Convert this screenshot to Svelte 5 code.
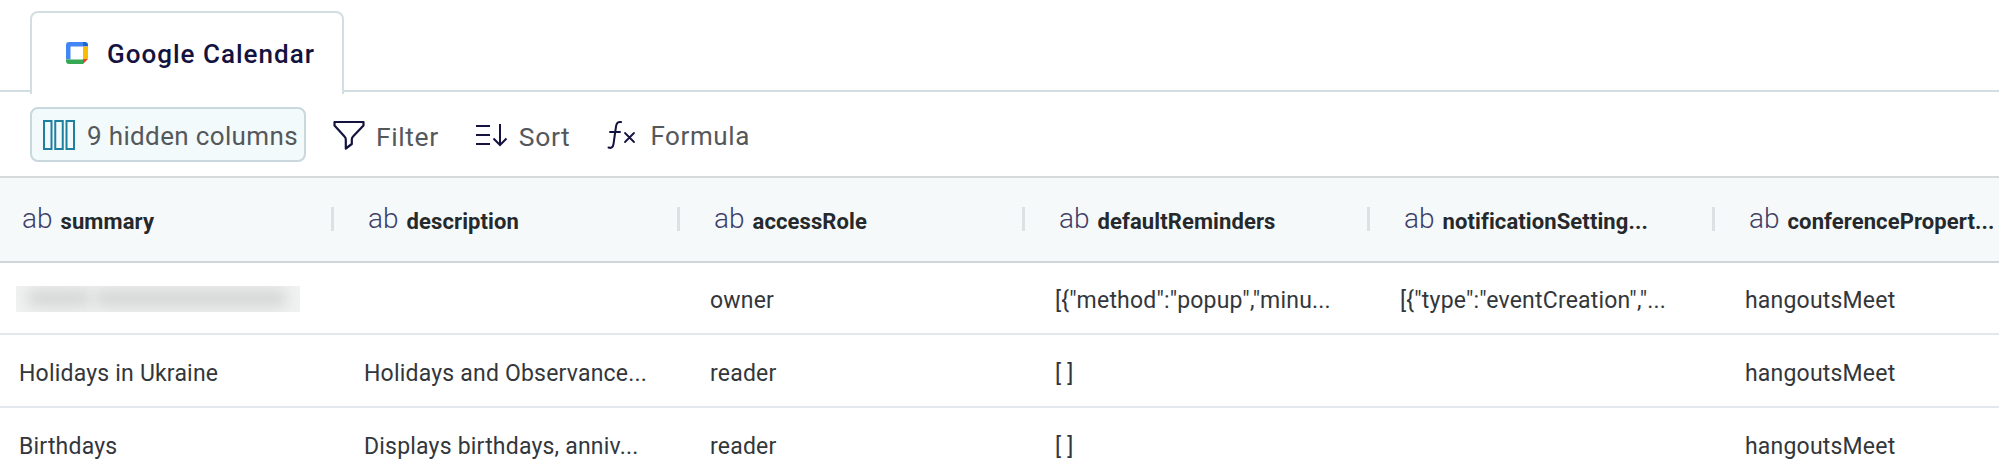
<script>
  const columns = [
    { name: 'summary' },
    { name: 'description' },
    { name: 'accessRole' },
    { name: 'defaultReminders' },
    { name: 'notificationSetting...' },
    { name: 'conferencePropert...' },
  ];
  const rows = [
    [null, '', 'owner', '[{"method":"popup","minu...', '[{"type":"eventCreation","...', 'hangoutsMeet'],
    ['Holidays in Ukraine', 'Holidays and Observance...', 'reader', '[ ]', '', 'hangoutsMeet'],
    ['Birthdays', 'Displays birthdays, anniv...', 'reader', '[ ]', '', 'hangoutsMeet'],
  ];
</script>

<div class="page">
  <div class="tabs">
    <div class="tab">
      <svg class="gcal" viewBox="0 0 22 22" width="22" height="22" aria-hidden="true">
        <path d="M3 0h14v4.500H4.500v13H0V3a3 3 0 0 1 3-3z" fill="#4285f4"/>
        <path d="M17 0h2a3 3 0 0 1 3 3v1.500h-5z" fill="#1967d2"/>
        <path d="M17 4.500h5V17h-5z" fill="#fbbc04"/>
        <path d="M0 17.500h17V22H3a3 3 0 0 1-3-3z" fill="#34a853"/>
        <path d="M17 17h5l-5 5z" fill="#ea4335"/>
      </svg>
      <span>Google Calendar</span>
    </div>
  </div>

  <div class="toolbar">
    <button class="tool hidden-cols" type="button">
      <svg viewBox="0 0 32 30" width="32" height="30" fill="none" stroke="#1f7f9f" stroke-width="2" aria-hidden="true">
        <rect x="1" y="1" width="7.500" height="28"/>
        <rect x="12.250" y="1" width="7.500" height="28"/>
        <rect x="23.500" y="1" width="7.500" height="28"/>
      </svg>
      <span>9 hidden columns</span>
    </button>
    <button class="tool" type="button">
      <svg viewBox="0 0 32 30" width="32" height="30" fill="none" stroke="#14123f" stroke-width="2.200" stroke-linejoin="round" aria-hidden="true">
        <path d="M1.500 2h29v3.500L20 16.500c-1 1-1.200 1.800-1.200 3V24l-6 4.500V19.500c0-1.200-.3-2-1.300-3L1.500 5.500z"/>
      </svg>
      <span>Filter</span>
    </button>
    <button class="tool" type="button">
      <svg viewBox="0 0 33 24" width="33" height="24" fill="none" stroke="#14123f" stroke-width="2" aria-hidden="true">
        <path d="M1 3h14M1 12h14M1 21h14"/>
        <path d="M25 1v21M18.500 15.500l6.500 6.500 6.500-6.500"/>
      </svg>
      <span>Sort</span>
    </button>
    <button class="tool formula" type="button">
      <svg viewBox="0 0 30 30" width="30" height="30" fill="none" stroke="#14123f" stroke-width="2" stroke-linecap="round" aria-hidden="true">
        <path d="M15 2c-3-.5-4.500 1-5 4.500L7.500 24c-.5 3.500-2.500 4.500-5 3.500"/>
        <path d="M4 12h10"/>
        <path d="M19 13l9 9M28 13l-9 9" stroke-width="1.800"/>
      </svg>
      <span>Formula</span>
    </button>
  </div>

  <div class="table">
    <div class="row head">
      {#each columns as col, i}
        <div class="th" class:sep={i > 0}>
          <span class="ab">ab</span>
          <span class="col-name">{col.name}</span>
        </div>
      {/each}
    </div>
    {#each rows as row}
      <div class="row body">
        {#each row as cell}
          <div class="td">
            {#if cell === null}
              <div class="blurred"><i></i><i></i></div>
            {:else}
              {cell}
            {/if}
          </div>
        {/each}
      </div>
    {/each}
  </div>
</div>

<style>
  :global(body) {
    margin: 0;
    background: #fff;
    overflow: hidden;
  }
  .page {
    width: 1999px;
    height: 472px;
    overflow: hidden;
    font-family: Roboto, "Liberation Sans", sans-serif;
    color: #2c3136;
  }
  .tabs {
    height: 92px;
    padding: 11px 0 0 30px;
    box-sizing: border-box;
    border-bottom: 2px solid #d3dee2;
    display: flex;
  }
  .tab {
    width: 314px;
    height: 83px;
    box-sizing: border-box;
    padding: 18px 0 17px 34px;
    display: flex;
    align-items: center;
    align-self: flex-start;
    gap: 19px;
    background: #fff;
    border: 2px solid #d3dee2;
    border-bottom: none;
    border-radius: 8px 8px 0 0;
    font-size: 26px;
    font-weight: 500;
    color: #14123f;
    letter-spacing: 1px;
  }
  .gcal {
    flex: none;
    margin-top: -3px;
  }
  .toolbar {
    height: 84px;
    box-sizing: border-box;
    padding: 15px 0 0 30px;
    display: flex;
    align-items: flex-start;
  }
  .tool {
    display: flex;
    align-items: center;
    gap: 11px;
    height: 55px;
    padding: 0;
    margin-right: 36px;
    border: none;
    background: none;
    font: inherit;
    font-size: 26.500px;
    color: #55585b;
    letter-spacing: 0.6px;
    white-space: nowrap;
  }
  .tool span {
    margin-top: 3px;
  }
  .formula {
    gap: 14px;
    font-size: 26px;
  }
  .hidden-cols {
    width: 276px;
    margin-right: 27px;
    box-sizing: border-box;
    padding-left: 11px;
    gap: 12px;
    font-size: 26px;
    letter-spacing: 0.35px;
    background: #f2fafc;
    border: 2px solid #c9d8de;
    border-radius: 8px;
  }
  .table {
    border-top: 2px solid #d6dada;
  }
  .row {
    display: grid;
    grid-template-columns: 331px 346px 345px 345px 345px 287px;
  }
  .head {
    height: 85px;
    box-sizing: border-box;
    background: #f5f9fa;
    border-bottom: 2px solid #d0d6d8;
  }
  .th {
    display: flex;
    align-items: center;
    gap: 8px;
    padding-left: 22px;
    position: relative;
    white-space: nowrap;
    overflow: hidden;
  }
  .th.sep {
    padding-left: 37px;
  }
  .th.sep::before {
    content: '';
    position: absolute;
    left: 0;
    top: 29px;
    width: 3px;
    height: 24px;
    background: #dde1e3;
  }
  .ab {
    font-size: 28px;
    font-weight: 300;
    color: #3d3f68;
    margin-top: -3px;
  }
  .col-name {
    font-size: 22px;
    font-weight: 700;
    color: #26292c;
    letter-spacing: 0.1px;
    margin-top: 4px;
  }
  .body {
    height: 73px;
    box-sizing: border-box;
    border-bottom: 2px solid #e3e7ee;
  }
  .head + .body {
    height: 72px;
  }
  .td {
    padding: 5px 0 0 33px;
    display: flex;
    align-items: center;
    font-size: 23px;
    letter-spacing: 0.2px;
    color: #33373b;
    white-space: pre;
    overflow: hidden;
  }
  .td:first-child {
    padding-left: 19px;
  }
  .blurred {
    width: 284px;
    height: 26px;
    margin: -4px 0 0 -3px;
    display: flex;
    gap: 6px;
    padding: 4px 12px;
    box-sizing: border-box;
    background: #f1f2f2;
    overflow: hidden;
  }
  .blurred i {
    display: block;
    height: 16px;
    background: #cfd2d1;
    filter: blur(8px);
  }
  .blurred i:first-child {
    width: 62px;
  }
  .blurred i:last-child {
    width: 190px;
  }
</style>
